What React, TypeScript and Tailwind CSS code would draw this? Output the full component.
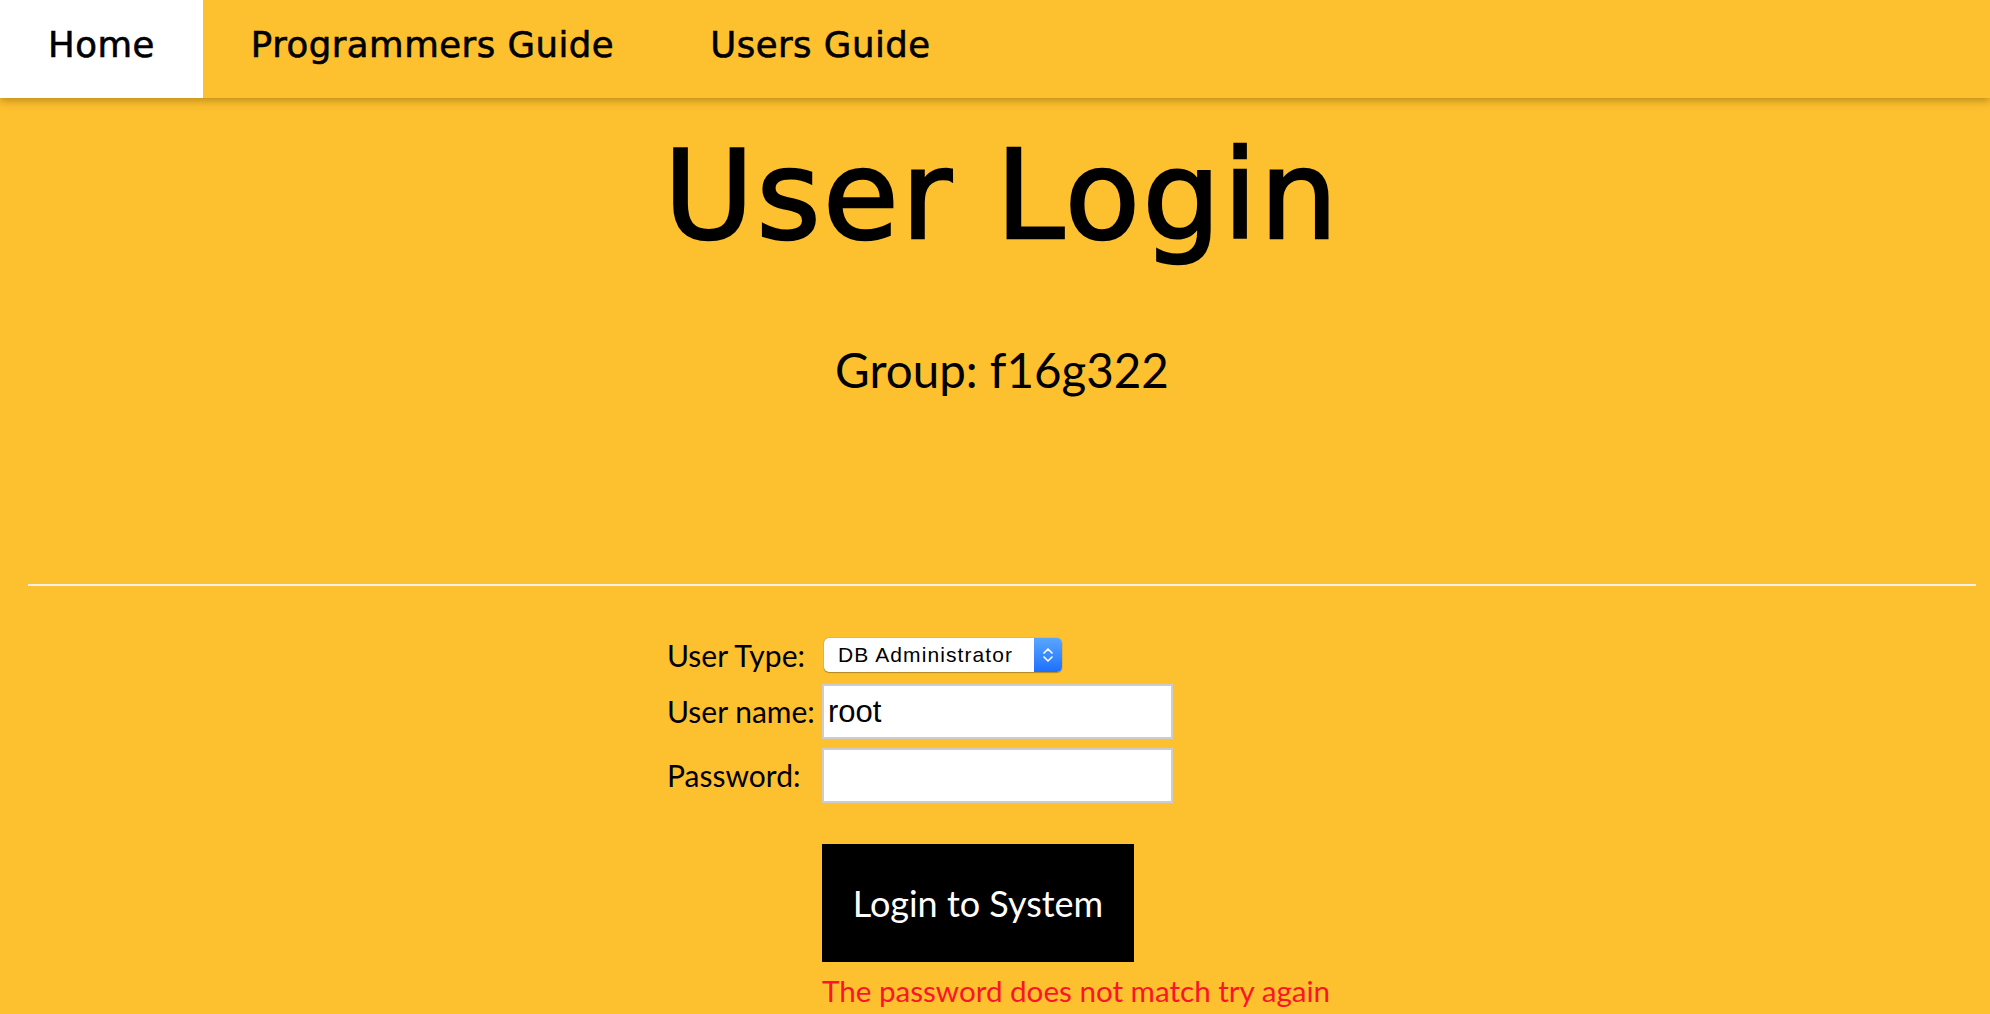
import { ChevronUp, ChevronDown } from "lucide-react";

const navItems = ["Home", "Programmers Guide", "Users Guide"];

function NavBar() {
  return (
    <nav className="relative z-10 flex h-[98px] bg-[#fdc02f] shadow-[0_3px_8px_rgba(120,80,0,0.45)]">
      {navItems.map((item, i) => (
        <a
          key={item}
          href="#"
          className={`flex h-full items-center px-[48px] pb-[8px] font-['DejaVu_Sans',sans-serif] text-[35.5px] tracking-[0.5px] text-black [-webkit-text-stroke:0.6px_black] ${
            i === 0 ? "bg-white" : ""
          }`}
        >
          {item}
        </a>
      ))}
    </nav>
  );
}

function SelectBox() {
  return (
    <div className="ml-[2px] flex h-[34px] w-[238px] overflow-hidden rounded-[5px] bg-white shadow-[0_0_1px_rgba(0,0,0,0.5),0_1px_1px_rgba(0,0,0,0.25)]">
      <div className="flex flex-1 items-center pl-[14px] font-['Liberation_Sans',sans-serif] text-[21px] tracking-[1.1px] text-black">
        DB Administrator
      </div>
      <div className="flex w-[28px] flex-col items-center justify-center bg-gradient-to-b from-[#5aa5ff] to-[#1b6fff] text-white">
        <ChevronUp size={16} strokeWidth={2.5} className="-mb-[4px]" />
        <ChevronDown size={16} strokeWidth={2.5} className="-mt-[4px]" />
      </div>
    </div>
  );
}

function Field({ value }: { value?: string }) {
  return (
    <div className="flex h-[55px] w-[351px] items-center border-2 border-[#cdcdcd] bg-white pl-[4px] font-['Liberation_Sans',sans-serif] text-[31px] text-black">
      {value}
    </div>
  );
}

export default function App() {
  return (
    <div className="min-h-screen bg-[#fdc02f] font-['Lato',sans-serif] text-black">
      <NavBar />
      <main className="ml-[28px] mr-[14px]">
        <h1 className="mt-[36px] text-center font-['DejaVu_Sans',sans-serif] text-[123px] leading-none tracking-[2.5px] [-webkit-text-stroke:2.5px_black]">
          User Login
        </h1>
        <p className="mt-[89px] text-center text-[47.5px] leading-none">Group: f16g322</p>
        <hr className="mt-[190px] border-0 border-t-2 border-[#f1efe6]" />

        <div className="ml-[639px] mt-[52px] flex flex-col text-[30px] leading-none">
          <div className="flex items-center">
            <span className="w-[155px]">User Type:</span>
            <SelectBox />
          </div>
          <div className="mt-[12px] flex items-center">
            <span className="w-[155px]">User name:</span>
            <Field value="root" />
          </div>
          <div className="mt-[9px] flex items-center">
            <span className="w-[155px]">Password:</span>
            <Field />
          </div>
          <div className="ml-[155px] mt-[41px]">
            <button className="flex h-[118px] w-[312px] items-center justify-center bg-black text-[36px] text-white">
              Login to System
            </button>
            <p className="mt-[14px] text-[29.6px] text-[#fc1429]">The password does not match try again</p>
          </div>
        </div>
      </main>
    </div>
  );
}
